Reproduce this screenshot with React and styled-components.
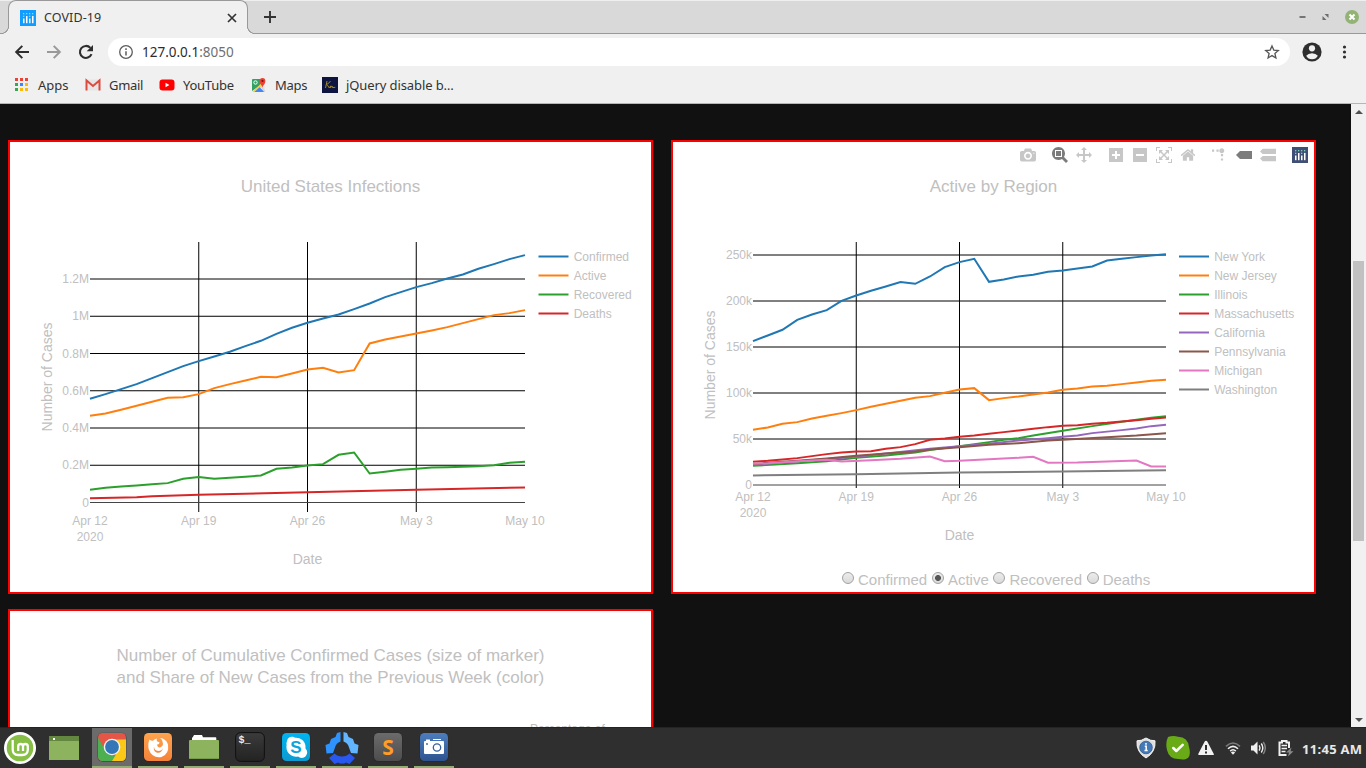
import React from 'react';
import styled, { createGlobalStyle } from 'styled-components';

const GlobalStyle = createGlobalStyle`
  * { box-sizing: border-box; }
  html, body { margin: 0; padding: 0; overflow: hidden; background: #111; }
`;

const uiFont = '"Noto Sans", "Open Sans", sans-serif';
const pageFont = '"Liberation Sans", Arial, sans-serif';

const Screen = styled.div`
  display: flex;
  flex-direction: column;
  width: 1366px;
  height: 768px;
  overflow: hidden;
  font-family: ${uiFont};
`;

/* ---------- browser frame ---------- */

const TabStrip = styled.div`
  display: flex;
  height: 34px;
  flex: none;
  padding: 0 8px;
  background: #d9d9d9;
  box-shadow: inset 0 1px #efefef, inset 0 -1px #999;
`;

const Tab = styled.div`
  position: relative;
  display: flex;
  align-items: center;
  width: 240px;
  height: 34px;
  padding: 0 10px 0 11px;
  background: #f0f0f0;
  border: 1px solid #999;
  border-bottom: none;
  border-radius: 8px 8px 0 0;
  &::before, &::after {
    content: '';
    position: absolute;
    bottom: 0;
    width: 8px;
    height: 8px;
  }
  &::before {
    left: -8px;
    background: radial-gradient(circle at 0 0, #d9d9d9 6.8px, #999 7.2px 7.8px, #f0f0f0 8.3px);
  }
  &::after {
    right: -8px;
    background: radial-gradient(circle at 100% 0, #d9d9d9 6.8px, #999 7.2px 7.8px, #f0f0f0 8.3px);
  }
`;

const TabTitle = styled.span`
  flex: 1;
  margin-left: 8px;
  font-size: 12.5px;
  line-height: 18px;
  letter-spacing: 0.1px;
  color: #333;
`;

const PlusBox = styled.div`
  display: flex;
  align-items: center;
  flex: 1;
  padding-left: 15px;
`;

const WindowButtons = styled.div`
  display: flex;
  align-items: center;
  gap: 16px;
  margin-right: -1px;
`;

const Toolbar = styled.div`
  display: flex;
  align-items: center;
  height: 36px;
  flex: none;
  padding: 0 12px 0 14px;
  background: #f0f0f0;
`;

const NavButtons = styled.div`
  display: flex;
  gap: 16px;
`;

const AddressBar = styled.div`
  display: flex;
  align-items: center;
  flex: 1;
  height: 28px;
  margin-left: 14px;
  padding: 0 10px;
  background: #fff;
  border-radius: 14px;
`;

const Address = styled.span`
  flex: 1;
  margin-left: 8px;
  font-size: 13.5px;
  line-height: 20px;
  color: #2c2c2c;
  span { color: #6f6f6f; }
`;

const ToolbarEnd = styled.div`
  display: flex;
  align-items: center;
  gap: 14px;
  margin-left: 12px;
`;

const BookmarkBar = styled.div`
  display: flex;
  height: 34px;
  flex: none;
  padding: 0 14px 3px;
  background: #f0f0f0;
  border-bottom: 1px solid #b6b6b6;
`;

const Bookmark = styled.div`
  display: flex;
  align-items: center;
  gap: 8px;
  width: ${(p) => p.$width}px;
  font-size: 13px;
  letter-spacing: ${(p) => p.$track || 0}px;
  white-space: nowrap;
  color: #333;
  svg { flex: none; }
`;

/* ---------- page ---------- */

const Viewport = styled.div`
  display: flex;
  height: 623px;
  flex: none;
  overflow: hidden;
`;

const Dashboard = styled.div`
  display: grid;
  grid-template-columns: 645px 645px;
  grid-auto-rows: 454px;
  gap: 15px 18px;
  flex: 1;
  padding: 36px 0 0 8px;
  background: #111;
  overflow: hidden;
  font-family: ${pageFont};
`;

const Panel = styled.section`
  position: relative;
  border: 2px solid red;
  background: #fff;
`;

const Figure = styled.svg`
  display: block;
  font-family: ${pageFont};
  text { fill: #c0c0c0; }
`;

const ModeBar = styled.div`
  position: absolute;
  top: 5px;
  right: 6px;
  display: flex;
  gap: 16px;
`;

const ModeGroup = styled.div`
  display: flex;
  gap: 8px;
`;

const ModeIcon = styled.svg`
  display: block;
  width: 16px;
  height: 16px;
  path { fill: ${(p) => (p.$on ? '#7c7c7c' : '#c7c7c7')}; }
`;

const RadioRow = styled.div`
  display: flex;
  gap: 4.7px;
  padding-left: 169px;
  padding-top: 4px;
`;

const RadioLabel = styled.label`
  display: flex;
  gap: 4px;
  font-size: 15px;
  line-height: 17px;
  color: #c0c0c0;
`;

const Radio = styled.span`
  width: 12px;
  height: 12px;
  margin-top: 1px;
  border: 1px solid #a2a2a2;
  border-radius: 50%;
  background: ${(p) =>
    p.$checked
      ? 'radial-gradient(circle, #555 0 2.6px, transparent 3.3px), linear-gradient(#ececec, #dadada)'
      : 'linear-gradient(#ececec, #dadada)'};
`;

const Scrollbar = styled.div`
  display: flex;
  flex-direction: column;
  align-items: center;
  width: 15px;
  background: #f1f1f1;
`;

const Arrow = styled.div`
  width: 0;
  height: 0;
  margin: ${(p) => (p.$down ? '177px 0 0' : '6px 0 1px')};
  border: 4px solid transparent;
  border-top: ${(p) => (p.$down ? '4px solid #505050' : 'none')};
  border-bottom: ${(p) => (p.$down ? 'none' : '4px solid #505050')};
`;

const Thumb = styled.div`
  width: 11px;
  height: 280px;
  margin-top: 146px;
  background: #c1c1c1;
`;

/* ---------- desktop panel ---------- */

const Taskbar = styled.div`
  display: flex;
  align-items: stretch;
  height: 41px;
  flex: none;
  padding: 0 4px;
  background: #2f2f2f;
  border-top: 1px solid #242424;
`;

const Launcher = styled.div`
  display: flex;
  align-items: center;
  width: 88px;
  gap: 13px;
`;

const TaskList = styled.div`
  display: flex;
  gap: 6px;
  flex: 1;
`;

const Task = styled.div`
  display: flex;
  justify-content: center;
  width: 40px;
  padding-top: 3px;
  background: ${(p) => (p.$active ? '#6b6b6b' : 'transparent')};
  border-bottom: 2px solid #8fae72;
`;

const Tray = styled.div`
  display: flex;
  align-items: center;
  svg { flex: none; }
`;

const TrayItem = styled.div`
  display: flex;
  margin-right: ${(p) => p.$gap}px;
`;

const Clock = styled.span`
  width: 60px;
  padding-top: 2px;
  font-size: 13px;
  font-weight: 700;
  line-height: 20px;
  letter-spacing: 0.3px;
  white-space: nowrap;
  color: #e8e8e8;
`;

/* ---------- charts ---------- */

const palette = ['#1f77b4', '#ff7f0e', '#2ca02c', '#d62728', '#9467bd', '#8c564b', '#e377c2', '#7f7f7f'];

// Each series lists a height per day, or [day, height] pairs where it is close to straight.
const usSeries = [
  ['Confirmed', [492, 478, 463, 448, 430, 412, 394, 379, 365, 351, 334, 318, 297, 279, 264, 251, 239, 223, 206, 187, 172, 157, 145, 131, 119, 102, 88, 73, 61]],
  ['Active', [543, 536, 525, 513, 501, 489, 487, 478, 460, 448, 437, 426, 427, 416, 404, 399, 413, 406, 326, 314, 305, 296, 287, 277, 265, 253, 241, 235, 226]],
  ['Recovered', [765, 759, 755, 752, 748, 745, 732, 727, 732, 729, 726, 722, 702, 698, 692, 688, 660, 653, 716, 711, 705, 702, 698, 697, 696, 694, 691, 684, 681]],
  ['Deaths', [[0, 790], [3, 787], [4, 784], [7, 780], [14, 772], [21, 765], [28, 758]]],
];

const regionSeries = [
  ['New York', [319, 302, 285, 255, 239, 226, 198, 182, 168, 155, 142, 147, 125, 97, 82, 72, 141, 134, 125, 120, 111, 107, 101, 95, 77, 72, 67, 62, 58]],
  ['New Jersey', [585, 578, 567, 562, 551, 543, 535, 526, 516, 507, 498, 489, 484, 474, 464, 460, 496, 490, 485, 479, 473, 465, 461, 455, 453, 448, 443, 438, 435]],
  ['Illinois', [[0, 693], [3, 685], [5, 679], [7, 669], [9, 662], [11, 653], [12, 646], [13, 640], [14, 634], [16, 622], [17, 615], [18, 610], [19, 602], [21, 588], [23, 574], [25, 561], [27, 549], [28, 544]]],
  ['Massachusetts', [681, 678, 674, 670, 664, 658, 653, 650, 649, 642, 637, 628, 615, 611, 606, 602, 597, 592, 587, 582, 577, 573, 571, 567, 564, 560, 556, 552, 548]],
  ['California', [[0, 690], [7, 666], [9, 656], [12, 642], [14, 634], [16, 627], [18, 617], [20, 610], [21, 606], [22, 602], [23, 595], [25, 586], [26, 581], [27, 574], [28, 570]]],
  ['Pennsylvania', [[0, 688], [1, 684], [3, 678], [5, 671], [7, 663], [9, 656], [11, 650], [12, 644], [14, 637], [16, 630], [18, 625], [20, 617], [21, 615], [24, 607], [26, 602], [28, 595]]],
  ['Michigan', [[0, 687], [1, 685], [3, 679], [5, 675], [6, 680], [8, 676], [10, 672], [12, 665], [13, 679], [14, 678], [16, 673], [18, 669], [19, 666], [20, 684], [22, 683], [24, 680], [26, 677], [27, 695], [28, 695]]],
  ['Washington', [[0, 722], [7, 718], [14, 713], [21, 710], [28, 706]]],
];

const dates = ['Apr 12', 'Apr 19', 'Apr 26', 'May 3', 'May 10'];

function LineChart({ title, series, left, plotX, plotW, zeroY, stepY, yLabels, bottom, tickY, dateY, legendX, yTitle, height }) {
  const x = (day) => plotX + (day * plotW) / 28;
  const line = (pts) => pts.map((p, i) => (Array.isArray(p) ? [x(p[0]), 234.8 + p[1] / 3] : [x(i), 234.8 + p / 3])).map(([a, b]) => a.toFixed(2) + ',' + b.toFixed(2)).join(' ');
  return (
    <Figure width="641" height={height} viewBox={`${left} 142 641 ${height}`}>
      <text x={left + 320.5} y="192" fontSize="17" textAnchor="middle">{title}</text>
      {[7, 14, 21].map((d) => (
        <line key={d} x1={x(d)} x2={x(d)} y1="242" y2={bottom} stroke="#000" />
      ))}
      {yLabels.map((label, i) => (
        <g key={label}>
          <line x1={plotX} x2={plotX + plotW} y1={zeroY - i * stepY} y2={zeroY - i * stepY} stroke={i ? '#000' : '#444'} />
          <text x={plotX - 1} y={zeroY - i * stepY + 4.2} fontSize="12" textAnchor="end">{label}</text>
        </g>
      ))}
      {series.map(([name, pts], i) => (
        <g key={name} stroke={palette[i]} strokeWidth="2" fill="none">
          <polyline points={line(pts)} />
          <line x1={legendX} x2={legendX + 30} y1={256.5 + i * 19} y2={256.5 + i * 19} />
          <text x={legendX + 35.2} y={260.9 + i * 19} fontSize="12" stroke="none">{name}</text>
        </g>
      ))}
      {dates.map((d, i) => (
        <text key={d} x={x(i * 7)} y={tickY} fontSize="12" textAnchor="middle">{d}</text>
      ))}
      <text x={plotX} y={tickY + 16} fontSize="12" textAnchor="middle">2020</text>
      <text x={plotX + plotW / 2} y={dateY} fontSize="14" textAnchor="middle">Date</text>
      <text transform={`translate(${yTitle[0]} ${yTitle[1]}) rotate(-90)`} fontSize="14" textAnchor="middle">Number of Cases</text>
    </Figure>
  );
}

const modeIcons = {
  camera: [1000, 'm500 450c-83 0-150-67-150-150 0-83 67-150 150-150 83 0 150 67 150 150 0 83-67 150-150 150z m400 150h-120c-16 0-34 13-39 29l-31 93c-6 15-23 28-40 28h-340c-16 0-34-13-39-28l-31-94c-6-15-23-28-40-28h-120c-55 0-100-45-100-100v-450c0-55 45-100 100-100h800c55 0 100 45 100 100v450c0 55-45 100-100 100z m-400-550c-138 0-250 112-250 250 0 138 112 250 250 250 138 0 250-112 250-250 0-138-112-250-250-250z m365 380c-19 0-35 16-35 35 0 19 16 35 35 35 19 0 35-16 35-35 0-19-16-35-35-35z'],
  zoom: [1000, 'm1000-25l-250 251c40 63 63 138 63 218 0 224-182 406-407 406-224 0-406-182-406-406s183-406 407-406c80 0 155 22 218 62l250-250 125 125z m-812 250l0 438 437 0 0-438-437 0z m62 375l313 0 0-312-313 0 0 312z'],
  pan: [1000, 'm1000 350l-187 188 0-125-250 0 0 250 125 0-188 187-187-187 125 0 0-250-250 0 0 125-188-188 186-187 0 125 252 0 0-250-125 0 187-188 188 188-125 0 0 250 250 0 0-126 187 188z'],
  plus: [875, 'm1 787l0-875 875 0 0 875-875 0z m687-500l-187 0 0-187-125 0 0 187-188 0 0 125 188 0 0 187 125 0 0-187 187 0 0-125z'],
  minus: [875, 'm0 788l0-876 875 0 0 876-875 0z m688-500l-500 0 0 125 500 0 0-125z'],
  autoscale: [1000, 'm250 850l-187 0-63 0 0-62 0-188 63 0 0 188 187 0 0 62z m688 0l-188 0 0-62 188 0 0-188 62 0 0 188 0 62-62 0z m-875-938l0 188-63 0 0-188 0-62 63 0 187 0 0 62-187 0z m875 188l0-188-188 0 0-62 188 0 62 0 0 62 0 188-62 0z m-125 188l-1 0-93-94-156 156 156 156 92-93 2 0 0 250-250 0 0-2 93-92-156-156-156 156 94 92 0 2-250 0 0-250 0 0 93 93 157-156-157-156-93 94 0 0 0-250 250 0 0 0-94 93 156 157 156-157-93-93 0 0 250 0 0 250z'],
  home: [928.6, 'm786 296v-267q0-15-11-26t-25-10h-214v214h-143v-214h-214q-15 0-25 10t-11 26v267q0 1 0 2t0 2l321 264 321-264q1-1 1-4z m124 39l-34-41q-5-5-12-6h-2q-7 0-12 3l-386 322-386-322q-7-4-13-4-7 2-12 7l-35 41q-4 5-3 13t6 12l401 334q18 15 42 15t43-15l136-114v109q0 8 5 13t13 5h107q8 0 13-5t5-13v-227l122-102q5-5 6-12t-4-13z'],
  spike: [1000, 'M512 409c0-57-46-104-103-104-57 0-104 47-104 104 0 57 47 103 104 103 57 0 103-46 103-103z m-327-39l92 0 0 92-92 0z m-185 0l92 0 0 92-92 0z m370-186l92 0 0 93-92 0z m0-184l92 0 0 92-92 0z', 'matrix(1.5 0 0 -1.5 0 850)'],
  closest: [1500, 'm375 725l0 0-375-375 375-374 0-1 1125 0 0 750-1125 0z'],
  compare: [1125, 'm187 786l0 2-187-188 188-187 0 0 937 0 0 373-938 0z m0-499l0 1-187-188 188-188 0 0 937 0 0 376-938-1z'],
};

function Mode({ name, on }) {
  const [w, d, t] = modeIcons[name];
  return (
    <ModeIcon $on={on} viewBox={`0 0 ${w} 1000`}>
      <path d={d} transform={t || 'matrix(1 0 0 -1 0 850)'} />
    </ModeIcon>
  );
}

function PlotlyMark({ bg, dots }) {
  return (
    <svg width="16" height="16" viewBox="0 0 16 16">
      <rect width="16" height="16" fill={bg} />
      <g fill={dots}>
        {[3, 6, 9, 12].map((x) => <rect key={x} x={x} y="3" width="1.3" height="1.3" />)}
        <rect x="3" y="5.7" width="1.3" height="1.3" />
        <rect x="9" y="5.7" width="1.3" height="1.3" />
        <rect x="12" y="5.7" width="1.3" height="1.3" opacity="0.5" />
      </g>
      <g fill="#fff">
        <rect x="3" y="8.5" width="1.5" height="4.7" />
        <rect x="6" y="6" width="1.5" height="7.2" />
        <rect x="9" y="8.5" width="1.5" height="4.7" />
        <rect x="12" y="6" width="1.5" height="7.2" />
      </g>
    </svg>
  );
}

/* ---------- icons ---------- */

const AppsIcon = () => (
  <svg width="16" height="16" viewBox="0 0 16 16">
    {['#ea4335', '#ea4335', '#ea4335', '#34a853', '#4285f4', '#fbbc05', '#34a853', '#fbbc05', '#fbbc05'].map((c, i) => (
      <rect key={i} x={1 + (i % 3) * 5} y={1 + Math.floor(i / 3) * 5} width="3" height="3" fill={c} />
    ))}
  </svg>
);

const GmailIcon = () => (
  <svg width="16" height="16" viewBox="0 0 16 16">
    <rect x="1" y="2.5" width="14" height="11" rx="1" fill="#e6e6e6" />
    <path d="M1.5 13.5V3.5L8 9l6.5-5.5V13.5" fill="none" stroke="#dd4b3e" strokeWidth="2" />
  </svg>
);

const YouTubeIcon = () => (
  <svg width="16" height="16" viewBox="0 0 16 16">
    <rect x="0.5" y="2.5" width="15" height="11" rx="3" fill="#f00" />
    <path d="M6.5 5.8v4.4L10.4 8z" fill="#fff" />
  </svg>
);

const MapsIcon = () => (
  <svg width="16" height="16" viewBox="0 0 16 16">
    <rect x="1" y="2" width="13" height="13" rx="1" fill="#e8e8e8" />
    <path d="M1 3q0-1 1-1h9L9.500 8 1 14z" fill="#34a065" />
    <path d="M1.500 15L10 6.500l1.500 2L5 15z" fill="#f7cd3c" />
    <path d="M3.500 15l5-4.700L13.500 15z" fill="#4285f4" />
    <path d="M9.500 9.500l1-1 3.500 5.500q0 1-1 1z" fill="#d4d4d4" />
    <circle cx="4.500" cy="5.500" r="1.700" fill="none" stroke="#fff" />
    <path d="M11.500 10.500C11 8 8.600 7 8.600 4a2.900 2.900 0 0 1 5.800 0c0 3-2.400 4-2.900 6.500z" fill="#ea4335" />
    <circle cx="11.500" cy="3.900" r="1.100" fill="#811411" />
  </svg>
);

const KirIcon = () => (
  <svg width="16" height="16" viewBox="0 0 16 16">
    <rect width="16" height="16" fill="#0d1440" />
    <path d="M5 4L3.500 11M8.500 4Q7 6.500 4.500 7.500Q6 8 7 10.800L8 10l.8-1.200-.3 1.900 1.700-1.700.1 1.600 3-.3" fill="none" stroke="#a8912e" strokeWidth="0.900" />
  </svg>
);

const BackIcon = ({ flip, color }) => (
  <svg width="16" height="16" viewBox="0 0 16 16">
    <path transform={flip ? 'translate(16 0) scale(-1 1)' : undefined} d="M15 8H2.500M8.300 1.900L2.200 8l6.100 6.100" fill="none" stroke={color} strokeWidth="2" />
  </svg>
);

const ReloadIcon = () => (
  <svg width="16" height="16" viewBox="0 0 16 16">
    <path d="M13.500 10.200A6 6 0 1 1 12.400 3.900" fill="none" stroke="#2e2e2e" strokeWidth="2.100" />
    <path d="M15 1v6.300H8.700z" fill="#2e2e2e" />
  </svg>
);

const RoundTile = ({ id, from, to, children }) => (
  <svg width="32" height="32" viewBox="0 0 32 32">
    <defs>
      <linearGradient id={id} x1="0" y1="0" x2="0" y2="1">
        <stop offset="0" stopColor={from} />
        <stop offset="1" stopColor={to} />
      </linearGradient>
    </defs>
    <rect x="1.500" y="1.700" width="29" height="29" rx="5" fill="#222" opacity="0.500" />
    <rect x="2" y="2" width="28" height="28" rx="4.500" fill={`url(#${id})`} />
    {children}
  </svg>
);

const MintIcon = () => (
  <svg width="32" height="32" viewBox="0 0 32 32">
    <circle cx="16" cy="16" r="16" fill="#fff" />
    <circle cx="16" cy="16" r="13.300" fill="#87bf46" />
    <path d="M8.700 8v9.500q0 5.500 5.500 5.500h4.100q5.500 0 5.500-5.500v-3q0-2.500-2.400-2.500t-2.400 2.500V19M19 14.500q0-2.500-2.400-2.500t-2.400 2.500V19" fill="none" stroke="#fff" strokeWidth="2.300" />
  </svg>
);

const DesktopIcon = () => (
  <svg width="30" height="24" viewBox="0 0 30 24">
    <rect width="30" height="24" fill="#8db35f" />
    <rect width="30" height="5" fill="#64873f" />
    <rect x="4" y="2" width="2" height="2" fill="#fff" />
  </svg>
);

const ChromeIcon = () => (
  <RoundTile id="chromeTile" from="#e55646" to="#e55646">
    <path d="M16 8.500h14v17a4.500 4.500 0 0 1-4.500 4.500H15l8-12z" fill="#fac816" />
    <path d="M2 6.500L9 19l8 5.500 3-1-4 6.500H6.500A4.500 4.500 0 0 1 2 25.500z" fill="#4caf50" />
    <circle cx="16" cy="16" r="8.300" fill="#f3f3f3" />
    <circle cx="16" cy="16" r="6.900" fill="#3377b8" />
  </RoundTile>
);

const FirefoxIcon = () => (
  <RoundTile id="firefoxTile" from="#ffa44d" to="#f5823a">
    <path d="M7.500 8.500Q9 10 11 9.700q1.700-1.900 4-2.200-1 1.500.3 3 2 .4 2.300 1.200-.3 1.500-2.600 2 .5 3.300 3.600 2.600 3.300-1.400 2-5.200Q20.500 8.500 18 7q6 .5 8 6.500 1.500 9.500-6.500 12.500-9.500 1.500-12.700-7.500Q5.500 13 7.500 8.500z" fill="#fff" />
    <path d="M12 15.500q0 4 4.300 4.500 3.700 0 4.700-3-1.200 5.500-6 4.700-4-1.200-3-6.200z" fill="#f58a3f" />
  </RoundTile>
);

const FolderIcon = () => (
  <svg width="32" height="32" viewBox="0 0 32 32">
    <path d="M4 10V7q0-.8.800-.8L6 4h8l1 2.200h12.500q.8 0 .8.800v3z" fill="#fff" />
    <rect x="1" y="9" width="30" height="19" rx="1" fill="#8db35f" />
    <path d="M1 27h30v1H1z" fill="#769b4b" />
  </svg>
);

const TerminalIcon = () => (
  <RoundTile id="terminalTile" from="#3b3b3b" to="#232323">
    <rect x="1.600" y="1.600" width="28.800" height="28.800" rx="5" fill="none" stroke="#111" />
    <text x="4.500" y="12.300" fontFamily="Liberation Mono, monospace" fontSize="10" fontWeight="700" fill="#eee">$_</text>
  </RoundTile>
);

const SkypeIcon = () => (
  <RoundTile id="skypeTile" from="#00b4f0" to="#0c9bd2">
    <path d="M7 10a5 5 0 0 1 8-3.300A9.500 9.500 0 0 1 25.500 17.500 5 5 0 0 1 18 25.400 9.500 9.500 0 0 1 6.600 14 6 6 0 0 1 7 10z" fill="#fff" />
    <text x="16" y="22.200" textAnchor="middle" fontFamily="Liberation Sans, sans-serif" fontSize="17" fontWeight="700" fill="#0aa5dc">S</text>
  </RoundTile>
);

const HubIcon = () => (
  <svg width="34" height="34" viewBox="0 0 34 34">
    <path d="M15.500 1v9.500q-4.500 1.500-5.500 6L8 22l-6.500.5L0.500 14l4-1.500L6 8l4.500-2L12 2z" fill="#2f93ff" />
    <path d="M18.500 1v9.500q4.500 1.500 5.500 6l2 5.500 6.500.5 1-8.500-4-1.500L28 8l-4.500-2L22 2z" fill="#62b5ff" />
    <path d="M9.500 22.500q3 3 7.500 3t7.500-3l5.500 4.500-5.500 6-3.500-1.500-2 1h-4l-2-1L9.500 33 4 27z" fill="#2858f0" />
  </svg>
);

const SublimeIcon = () => (
  <RoundTile id="sublimeTile" from="#6b6b6b" to="#4d4d4d">
    <text x="16" y="23.500" textAnchor="middle" fontFamily="Noto Sans, sans-serif" fontSize="21" fontWeight="700" fill="#ff9d24">S</text>
  </RoundTile>
);

const CameraAppIcon = () => (
  <RoundTile id="cameraTile" from="#4d7dbd" to="#2e5490">
    <path d="M6 11q0-1 1-1h1V8.500h4V10h13q1 0 1 1v11q0 1-1 1H7q-1 0-1-1zM15 8h8v1h-8z" fill="#fff" />
    <circle cx="19" cy="16.500" r="3.700" fill="#fff" stroke="#365f9e" strokeWidth="1.300" />
    <circle cx="9" cy="13" r="0.900" fill="#365f9e" />
  </RoundTile>
);

const ShieldIcon = () => (
  <svg width="20" height="22" viewBox="0 0 20 22">
    <path d="M10 1Q5.500 4 1 3.800 0 15 10 21 20 15 19 3.800 14.500 4 10 1z" fill="#dedede" stroke="#f6f6f6" />
    <circle cx="10" cy="10.500" r="6.300" fill="#4479b8" stroke="#315a8b" strokeWidth="0.800" />
    <path d="M10 6v1.800M8.800 9.300h1.400v4.200M8.500 13.600h3.200" stroke="#fff" strokeWidth="1.500" fill="none" />
  </svg>
);

const StatusIcon = () => (
  <svg width="24" height="24" viewBox="0 0 24 24">
    <path d="M2 1Q7-.8 12 .7 22 1 23 11q1.500 5 .3 9-1 3-4 3.300-3 .5-7-.3Q3 23 1 14-.8 7 2 1z" fill="#68ab16" />
    <path d="M7.300 12l3 3 6.400-6.200" fill="none" stroke="#fff" strokeWidth="2.500" strokeLinecap="round" strokeLinejoin="round" />
  </svg>
);

const WarningIcon = () => (
  <svg width="16" height="16" viewBox="0 0 16 16">
    <path d="M8 .8Q9 .8 9.300 1.500L15.800 14q.3 1-.8 1H1Q0 15 .2 14L6.700 1.500Q7 .8 8 .8z" fill="#f2f2f2" />
    <path d="M7 5h2v5H7zM7 11.500h2v2H7z" fill="#2f2f2f" />
  </svg>
);

const WifiIcon = () => (
  <svg width="16" height="16" viewBox="0 0 16 16" fill="none" strokeWidth="1.600">
    <path d="M1 6.300Q8-.3 15 6.300" stroke="#7c7c7c" />
    <path d="M3 8.800Q8 3.900 13 8.800M5.200 11.100Q8 8.400 10.800 11.100" stroke="#f0f0f0" />
    <path d="M8 14.700L5.900 12.500Q8 10.700 10.100 12.500z" fill="#f0f0f0" />
  </svg>
);

const VolumeIcon = () => (
  <svg width="16" height="16" viewBox="0 0 16 16" fill="none" strokeWidth="1.400">
    <path d="M0 5.500h2.500L6.500 1.500v13L2.500 10.500H0z" fill="#f0f0f0" />
    <path d="M8.200 5.300q1.600 2.700 0 5.400M10.300 3.500q3 4.500 0 9" stroke="#f0f0f0" />
    <path d="M12.300 2q4 6 0 12" stroke="#858585" />
  </svg>
);

const BatteryIcon = () => (
  <svg width="16" height="16" viewBox="0 0 16 16" fill="none">
    <path d="M8.500 15h-7V2.500h2.500v-1.500h4.500v1.500H11V8" stroke="#f0f0f0" strokeWidth="2" />
    <path d="M3.500 5.500h5.500M3.500 8.500h5.500M3.500 11.500h4" stroke="#f0f0f0" strokeWidth="1.500" />
    <path d="M13.500 7.500l-5.500 5h3l-1 4 5.500-5.200h-2.900z" fill="#8a8a8a" />
  </svg>
);

function BrowserFrame() {
  return (
    <>
      <TabStrip>
        <Tab>
          <PlotlyMark bg="#119dff" dots="#6de3f7" />
          <TabTitle>COVID-19</TabTitle>
          <svg width="10" height="10" viewBox="0 0 10 10"><path d="M1 1l8 8M9 1L1 9" stroke="#333" strokeWidth="1.700" /></svg>
        </Tab>
        <PlusBox>
          <svg width="14" height="14" viewBox="0 0 14 14"><path d="M7 1v12M1 7h12" stroke="#333" strokeWidth="1.900" /></svg>
        </PlusBox>
        <WindowButtons>
          <svg width="7" height="8" viewBox="0 0 7 8"><path d="M.5 4h6" stroke="#6a6a6a" strokeWidth="1.800" /></svg>
          <svg width="7" height="8" viewBox="0 0 7 8"><path d="M2.500 1H6.500v4zM.5 3v4h4z" fill="#6d6d6d" /></svg>
          <svg width="14" height="14" viewBox="0 0 14 14">
            <circle cx="7" cy="7" r="7" fill="#92b374" />
            <path d="M4.500 4.500l5 5M9.500 4.500l-5 5" stroke="#fff" strokeWidth="2" />
          </svg>
        </WindowButtons>
      </TabStrip>
      <Toolbar>
        <NavButtons>
          <BackIcon color="#2e2e2e" />
          <BackIcon color="#999" flip />
          <ReloadIcon />
        </NavButtons>
        <AddressBar>
          <svg width="16" height="16" viewBox="0 0 16 16">
            <circle cx="8" cy="8" r="6.300" fill="none" stroke="#5c5c5c" strokeWidth="1.300" />
            <path d="M8 4.300v1.600M8 7.200v4.400" stroke="#5c5c5c" strokeWidth="1.500" />
          </svg>
          <Address>127.0.0.1<span>:8050</span></Address>
          <svg width="16" height="16" viewBox="0 0 16 16">
            <path d="M8 1.900l1.800 4.200 4.500.4-3.400 3 1 4.500L8 11.600 4.100 14l1-4.500-3.400-3 4.500-.4z" fill="none" stroke="#555" strokeWidth="1.300" />
          </svg>
        </AddressBar>
        <ToolbarEnd>
          <svg width="20" height="20" viewBox="0 0 20 20">
            <circle cx="10" cy="10" r="9.600" fill="#2e2e2e" />
            <circle cx="10" cy="6.300" r="3.100" fill="#f0f0f0" />
            <path d="M4.200 13.700q2-2.500 5.800-2.500t5.800 2.500Q14 17.200 10 17.200T4.200 13.700z" fill="#f0f0f0" />
          </svg>
          <svg width="18" height="16" viewBox="0 0 18 16" fill="#2e2e2e">
            <circle cx="8.500" cy="3" r="1.600" /><circle cx="8.500" cy="8" r="1.600" /><circle cx="8.500" cy="13" r="1.600" />
          </svg>
        </ToolbarEnd>
      </Toolbar>
      <BookmarkBar>
        <Bookmark $width={71}><AppsIcon />Apps</Bookmark>
        <Bookmark $width={74} $track={-0.3}><GmailIcon />Gmail</Bookmark>
        <Bookmark $width={92} $track={-0.25}><YouTubeIcon />YouTube</Bookmark>
        <Bookmark $width={71} $track={-0.3}><MapsIcon />Maps</Bookmark>
        <Bookmark $width={140} $track={-0.1}><KirIcon />jQuery disable b…</Bookmark>
      </BookmarkBar>
    </>
  );
}

const options = ['Confirmed', 'Active', 'Recovered', 'Deaths'];

function Page() {
  return (
    <Viewport>
      <Dashboard>
        <Panel>
          <LineChart
            title="United States Infections" series={usSeries} left={10} height={450}
            plotX={90} plotW={435} zeroY={502.5} stepY={37.25}
            yLabels={['0', '0.2M', '0.4M', '0.6M', '0.8M', '1M', '1.2M']}
            bottom={512} tickY={525} dateY={564} legendX={538.5} yTitle={[52, 377]}
          />
        </Panel>
        <Panel>
          <LineChart
            title="Active by Region" series={regionSeries} left={673} height={425}
            plotX={753} plotW={413} zeroY={485} stepY={46}
            yLabels={['0', '50k', '100k', '150k', '200k', '250k']}
            bottom={488} tickY={501} dateY={540} legendX={1179} yTitle={[715, 365]}
          />
          <ModeBar>
            <ModeGroup><Mode name="camera" /></ModeGroup>
            <ModeGroup><Mode name="zoom" on /><Mode name="pan" /></ModeGroup>
            <ModeGroup><Mode name="plus" /><Mode name="minus" /><Mode name="autoscale" /><Mode name="home" /></ModeGroup>
            <ModeGroup><Mode name="spike" /><Mode name="closest" on /><Mode name="compare" /></ModeGroup>
            <ModeGroup><PlotlyMark bg="#3f4f75" dots="#80cfbe" /></ModeGroup>
          </ModeBar>
          <RadioRow>
            {options.map((o) => (
              <RadioLabel key={o}><Radio $checked={o === 'Active'} />{o}</RadioLabel>
            ))}
          </RadioRow>
        </Panel>
        <Panel>
          <Figure width="641" height="450" viewBox="10 611 641 450">
            <text x="116.500" y="661" fontSize="17">Number of Cumulative Confirmed Cases (size of marker)</text>
            <text x="116.500" y="683" fontSize="17">and Share of New Cases from the Previous Week (color)</text>
            <text x="530" y="733" fontSize="12">Percentage of</text>
          </Figure>
        </Panel>
      </Dashboard>
      <Scrollbar>
        <Arrow />
        <Thumb />
        <Arrow $down />
      </Scrollbar>
    </Viewport>
  );
}

function DesktopPanel() {
  return (
    <Taskbar>
      <Launcher><MintIcon /><DesktopIcon /></Launcher>
      <TaskList>
        <Task $active><ChromeIcon /></Task>
        <Task><FirefoxIcon /></Task>
        <Task><FolderIcon /></Task>
        <Task><TerminalIcon /></Task>
        <Task><SkypeIcon /></Task>
        <Task><HubIcon /></Task>
        <Task><SublimeIcon /></Task>
        <Task><CameraAppIcon /></Task>
      </TaskList>
      <Tray>
        <TrayItem $gap={10}><ShieldIcon /></TrayItem>
        <TrayItem $gap={8}><StatusIcon /></TrayItem>
        <TrayItem $gap={11}><WarningIcon /></TrayItem>
        <TrayItem $gap={10}><WifiIcon /></TrayItem>
        <TrayItem $gap={11}><VolumeIcon /></TrayItem>
        <TrayItem $gap={8}><BatteryIcon /></TrayItem>
        <Clock>11:45 AM</Clock>
      </Tray>
    </Taskbar>
  );
}

export default function App() {
  return (
    <Screen>
      <GlobalStyle />
      <BrowserFrame />
      <Page />
      <DesktopPanel />
    </Screen>
  );
}
